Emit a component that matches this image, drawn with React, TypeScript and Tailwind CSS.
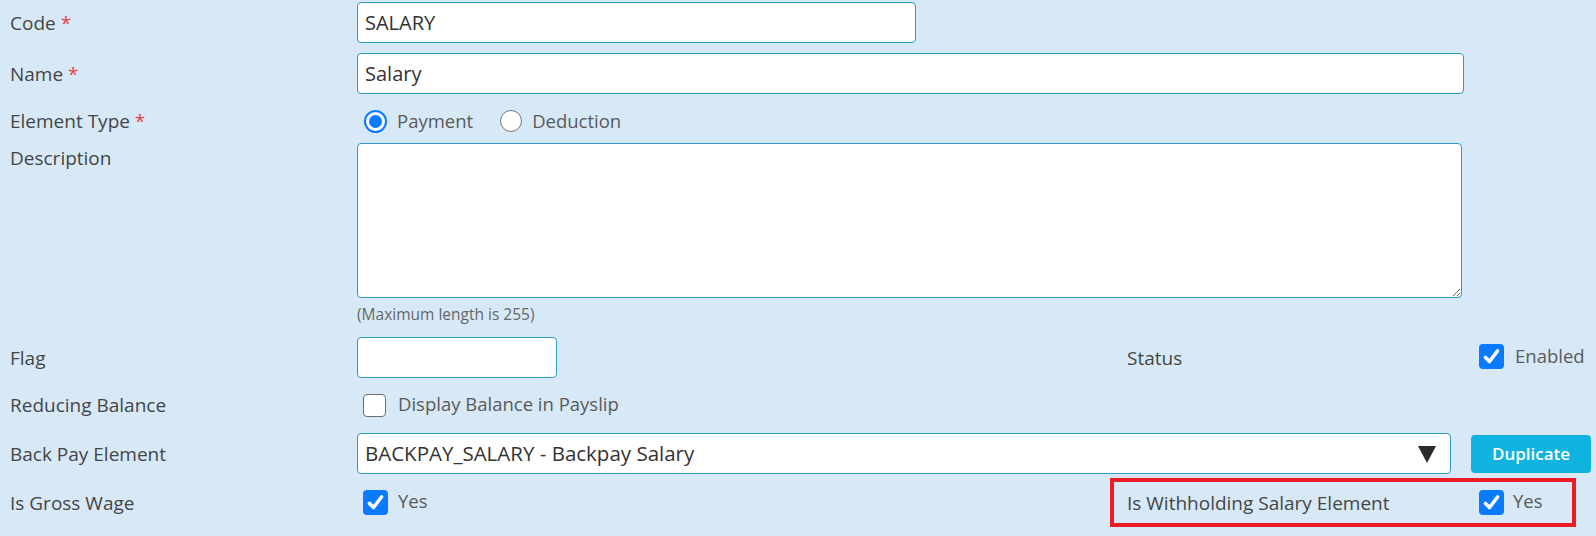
import type { ReactNode } from "react";

const label = "w-[357px] shrink-0 pl-[10px] text-[19px] leading-[26px] text-[#454545]";
const field =
  "h-[41px] rounded-[4px] border border-[#2f9bc8] bg-white px-[7px] text-[20px] text-[#333] outline-none";
const optText = "text-[18.5px] leading-[26px] text-[#5a5a5a]";

function Req() {
  return <span className="text-[#e5453f]"> *</span>;
}

function Checkbox({ checked }: { checked: boolean }) {
  if (!checked) {
    return (
      <span className="block h-[23px] w-[23px] shrink-0 rounded-[4px] border-[1.5px] border-[#6e6e6e] bg-white" />
    );
  }
  return (
    <span className="flex h-[25px] w-[25px] shrink-0 items-center justify-center rounded-[4px] bg-[#0a7bff]">
      <svg width="19" height="19" viewBox="0 0 19 19">
        <path
          d="M3.5 10.5 L7.5 14.5 L15.5 4"
          fill="none"
          stroke="white"
          strokeWidth="3.6"
          strokeLinecap="round"
          strokeLinejoin="round"
        />
      </svg>
    </span>
  );
}

function Radio({ checked }: { checked: boolean }) {
  return checked ? (
    <span className="flex h-[23px] w-[23px] shrink-0 items-center justify-center rounded-full border-2 border-[#0a7bff] bg-white">
      <span className="block h-[13px] w-[13px] rounded-full bg-[#0a7bff]" />
    </span>
  ) : (
    <span className="block h-[22px] w-[22px] shrink-0 rounded-full border-[1.5px] border-[#767676] bg-white" />
  );
}

function Row({ name, children, className = "" }: { name: ReactNode; children?: ReactNode; className?: string }) {
  return (
    <div className={`flex items-center ${className}`}>
      <div className={label}>{name}</div>
      {children}
    </div>
  );
}

export default function App() {
  return (
    <div className="h-[536px] w-full overflow-hidden bg-[#d7e9f7] font-['Open_Sans',sans-serif]">
      <div className="pt-[2px]">
        <Row name={<>Code<Req /></>}>
          <input defaultValue="SALARY" className={`${field} w-[559px]`} />
        </Row>

        <Row name={<>Name<Req /></>} className="mt-[10px]">
          <input defaultValue="Salary" className={`${field} w-[1107px]`} />
        </Row>

        <Row name={<>Element Type<Req /></>} className="mt-[7px] h-[40px]">
          <div className="flex items-center pl-[7px]">
            <Radio checked />
            <span className={`${optText} ml-[10px]`}>Payment</span>
            <span className="ml-[27px]">
              <Radio checked={false} />
            </span>
            <span className={`${optText} ml-[10px]`}>Deduction</span>
          </div>
        </Row>

        <div className="mt-[2px] flex items-start">
          <div className={`${label} pt-[2px]`}>Description</div>
          <div className="flex flex-col">
            <textarea className="h-[155px] w-[1105px] rounded-[4px] border border-[#2f9bc8] bg-white px-[7px] py-[4px] text-[18px] outline-none" />
            <span className="mt-[6px] text-[15.5px] leading-[20px] text-[#666]">(Maximum length is 255)</span>
          </div>
        </div>

        <div className="mt-[13px] grid grid-cols-[1110px_1fr] items-center">
          <Row name="Flag">
            <input className={`${field} w-[200px]`} />
          </Row>
          <div className="flex items-center pl-[17px]">
            <span className="w-[352px] text-[19px] leading-[26px] text-[#454545]">Status</span>
            <div className="-mt-[3px] flex items-center">
              <Checkbox checked />
              <span className={`${optText} ml-[11px]`}>Enabled</span>
            </div>
          </div>
        </div>

        <Row name="Reducing Balance" className="mt-[7px] h-[40px]">
          <div className="flex items-center pl-[6px]">
            <Checkbox checked={false} />
            <span className={`${optText} ml-[12px] -mt-[2px]`}>Display Balance in Payslip</span>
          </div>
        </Row>

        <Row name="Back Pay Element" className="mt-[8px]">
          <div className="flex h-[41px] w-[1094px] items-center justify-between rounded-[4px] border border-[#2f9bc8] bg-white pl-[7px] pr-[14px]">
            <span className="text-[20.5px] text-[#333]">BACKPAY_SALARY - Backpay Salary</span>
            <svg width="18" height="18" viewBox="0 0 18 18">
              <polygon points="0,1 18,1 9,18" fill="#2b2b2b" />
            </svg>
          </div>
          <button className="ml-[20px] h-[38px] w-[120px] rounded-[4px] bg-[#0fb3df] text-[17px] font-semibold text-white">
            Duplicate
          </button>
        </Row>

        <div className="mt-[4px] grid grid-cols-[1110px_466px] items-center">
          <Row name="Is Gross Wage">
            <div className="flex items-center pl-[6px]">
              <Checkbox checked />
              <span className={`${optText} ml-[10px] -mt-[4px]`}>Yes</span>
            </div>
          </Row>
          <div className="flex h-[49px] items-center border-4 border-[#ec1c24] pl-[13px]">
            <span className="w-[352px] text-[19px] leading-[26px] text-[#454545]">Is Withholding Salary Element</span>
            <Checkbox checked />
            <span className={`${optText} ml-[9px] -mt-[4px]`}>Yes</span>
          </div>
        </div>
      </div>
    </div>
  );
}
